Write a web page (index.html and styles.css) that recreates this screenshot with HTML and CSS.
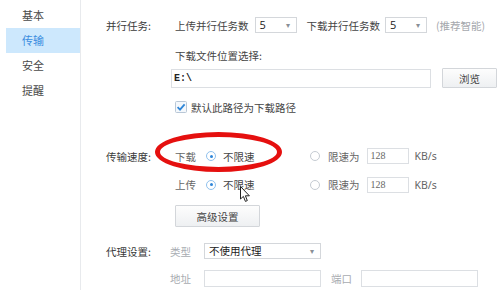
FILE: index.html
```html
<!DOCTYPE html>
<html lang="zh-CN">
<head>
    <meta charset="UTF-8">
    <title>传输设置</title>
    <link rel="stylesheet" href="styles.css">
</head>
<body>
    <div class="app">
        <div class="sidebar">
            <div class="nav-item">基本</div>
            <div class="nav-item active">传输</div>
            <div class="nav-item">安全</div>
            <div class="nav-item">提醒</div>
        </div>

        <div class="main">
            <!-- 并行任务 -->
            <div class="row row-tasks">
                <div class="label">并行任务:</div>
                <div class="content">
                    <span>上传并行任务数</span>
                    <div class="select small sel-up">5<span class="arrow">▾</span></div>
                    <span class="after-sel">下载并行任务数</span>
                    <div class="select small sel-down">5<span class="arrow">▾</span></div>
                    <span class="hint">(推荐智能)</span>
                </div>
            </div>

            <div class="row row-pathlabel">
                <div class="label"></div>
                <div class="content">下载文件位置选择:</div>
            </div>

            <div class="row row-path">
                <div class="label"></div>
                <div class="content">
                    <div class="input path">E:\</div>
                    <button class="btn browse">浏览</button>
                </div>
            </div>

            <div class="row row-check">
                <div class="label"></div>
                <div class="content">
                    <span class="checkbox">
                        <svg width="12" height="12" viewBox="0 0 12 12">
                            <rect x="0.5" y="0.5" width="11" height="11" rx="1" fill="#f4f8fc" stroke="#b9c7d6"/>
                            <path d="M2.6 6.2 L5 8.6 L9.6 3.4" fill="none" stroke="#2f86d8" stroke-width="1.8"/>
                        </svg>
                    </span>
                    <span>默认此路径为下载路径</span>
                </div>
            </div>

            <!-- 传输速度 -->
            <div class="row row-speed1">
                <div class="label">传输速度:</div>
                <div class="content">
                    <div class="speed-left">
                        <span class="dim">下载</span>
                        <span class="radio on"></span>
                        <span>不限速</span>
                    </div>
                    <span class="radio"></span>
                    <span class="dim">限速为</span>
                    <div class="input rate">128</div>
                    <span class="dim unit">KB/s</span>
                </div>
            </div>

            <div class="row row-speed2">
                <div class="label"></div>
                <div class="content">
                    <div class="speed-left">
                        <span class="dim">上传</span>
                        <span class="radio on"></span>
                        <span>不限速</span>
                    </div>
                    <span class="radio"></span>
                    <span class="dim">限速为</span>
                    <div class="input rate">128</div>
                    <span class="dim unit">KB/s</span>
                </div>
            </div>

            <div class="row row-adv">
                <div class="label"></div>
                <div class="content">
                    <button class="btn advanced">高级设置</button>
                </div>
            </div>

            <!-- 代理设置 -->
            <div class="row row-proxy1">
                <div class="label">代理设置:</div>
                <div class="content proxy">
                    <span class="faint">类型</span>
                    <div class="select wide">不使用代理<span class="arrow">▾</span></div>
                </div>
            </div>

            <div class="row row-proxy2">
                <div class="label"></div>
                <div class="content proxy">
                    <span class="faint">地址</span>
                    <div class="input addr"></div>
                    <span class="faint port-label">端口</span>
                    <div class="input port"></div>
                </div>
            </div>
        </div>
    </div>

    <div class="mark"></div>
    <svg class="cursor" width="11" height="17" viewBox="0 0 11 17">
        <path d="M0.5 0.5 L0.5 13 L3.4 10.4 L5.4 15.4 L7.3 14.6 L5.4 9.8 L9.4 9.8 Z" fill="#fff" stroke="#222" stroke-width="1"/>
    </svg>
</body>
</html>
```

FILE: styles.css
```css
body {
    margin: 0;
    width: 502px;
    height: 290px;
    overflow: hidden;
    background: #fff;
    color: #444;
    font-family: "Noto Sans CJK SC", "Microsoft YaHei", sans-serif;
    font-size: 10.5px;
    position: relative;
}

.app {
    display: flex;
    height: 290px;
}

/* left navigation */
.sidebar {
    width: 81px;
    border-right: 1px solid #e8eaed;
    padding-top: 3px;
    box-sizing: border-box;
    flex-shrink: 0;
}

.nav-item {
    height: 25px;
    line-height: 25px;
    padding-left: 22px;
    font-size: 11px;
    color: #4a4a4a;
}

.nav-item.active {
    margin-left: 6px;
    padding-left: 16px;
    background: #cde8fd;
    color: #3b8de0;
}

/* settings area */
.main {
    flex: 1;
    padding-left: 25px;
}

.row {
    display: flex;
    align-items: center;
}

.label {
    width: 69px;
    flex-shrink: 0;
    color: #3a3a3a;
}

.content {
    display: flex;
    align-items: center;
    white-space: nowrap;
}

.content.proxy {
    margin-left: -5px;
}

.row-tasks { margin-top: 17px; height: 16px; }
.row-pathlabel { margin-top: 14px; height: 16px; }
.row-path { margin-top: 5px; height: 20px; }
.row-check { margin-top: 12px; height: 14px; }
.row-speed1 { margin-top: 34px; height: 16px; }
.row-speed2 { margin-top: 12px; height: 17px; }
.row-adv { margin-top: 12px; height: 22px; }
.row-proxy1 { margin-top: 16px; height: 16px; }
.row-proxy2 { margin-top: 11px; height: 17px; }

.select {
    position: relative;
    height: 16px;
    line-height: 14px;
    border: 1px solid #d4d7db;
    box-sizing: border-box;
    padding-left: 4px;
    background: #fff;
    color: #222;
}

.select.small {
    width: 42px;
    font-family: "Open Sans", "Liberation Sans", sans-serif;
    font-size: 11px;
}

.sel-up { margin-left: 6px; }
.sel-down { margin-left: 5px; }
.after-sel { margin-left: 10px; }

.select.wide {
    width: 117px;
    margin-left: 13px;
}

.arrow {
    position: absolute;
    right: 6px;
    top: 0;
    font-size: 8px;
    color: #8a8f96;
}

.hint {
    margin-left: 9px;
    color: #a5a8ad;
}

.input {
    height: 16px;
    line-height: 14px;
    border: 1px solid #dcdfe3;
    box-sizing: border-box;
    background: #fff;
}

.input.path {
    width: 260px;
    height: 19px;
    line-height: 17px;
    margin-left: -4px;
    padding-left: 2px;
    font-family: "Liberation Mono", monospace;
    font-weight: bold;
    font-size: 10px;
    color: #222;
}

.btn {
    font-family: inherit;
    font-size: 10.5px;
    color: #444;
    border: 1px solid #d3d6da;
    background: linear-gradient(#fdfdfd, #eef0f2);
    border-radius: 1px;
    padding: 0;
    cursor: pointer;
}

.btn.browse {
    width: 55px;
    height: 20px;
    margin-left: 11px;
}

.btn.advanced {
    width: 85px;
    height: 22px;
}

.checkbox {
    display: inline-flex;
    margin-right: 4px;
}

.dim {
    color: #666;
}

.faint {
    color: #a8acb1;
}

.speed-left {
    display: flex;
    align-items: center;
    width: 135px;
}

.radio {
    width: 10px;
    height: 10px;
    border: 1px solid #c5cbd2;
    border-radius: 50%;
    box-sizing: border-box;
    background: #fff;
    margin-right: 8px;
    position: relative;
}

.speed-left .radio {
    margin-left: 10px;
    margin-right: 7px;
}

.radio.on {
    border-color: #8fc1ee;
}

.radio.on::after {
    content: "";
    position: absolute;
    left: 2.5px;
    top: 2.5px;
    width: 3px;
    height: 3px;
    border-radius: 50%;
    background: #2f86d8;
}

.input.rate {
    width: 42px;
    margin-left: 7px;
    padding-left: 3px;
    font-family: "Liberation Serif", serif;
    font-size: 10px;
    color: #666;
}

.unit {
    margin-left: 6px;
    font-family: "Noto Sans", "Liberation Sans", sans-serif;
}

.input.addr {
    width: 117px;
    height: 17px;
    margin-left: 13px;
}

.port-label {
    margin-left: 10px;
}

.input.port {
    width: 117px;
    height: 17px;
    margin-left: 9px;
}

/* red annotation + pointer drawn over the screenshot */
.mark {
    position: absolute;
    left: 155px;
    top: 132px;
    width: 127px;
    height: 40px;
    box-sizing: border-box;
    border: 5px solid #e5100f;
    border-radius: 50%;
}

.cursor {
    position: absolute;
    left: 240px;
    top: 186px;
}
```
